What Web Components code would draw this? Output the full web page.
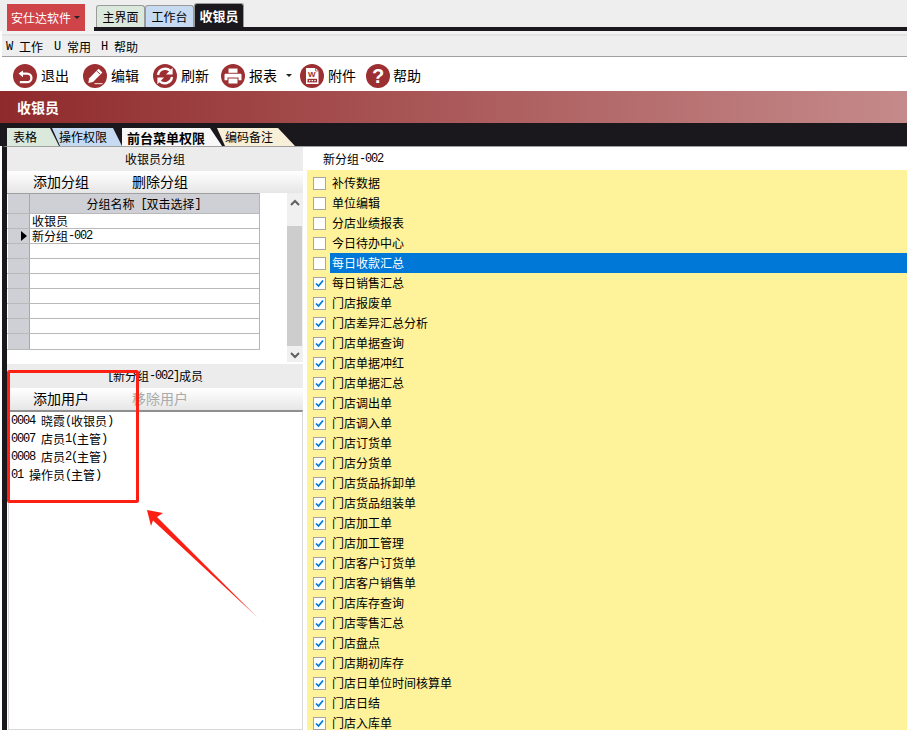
<!doctype html>
<html lang="zh">
<head>
<meta charset="utf-8">
<title>收银员</title>
<style>
  html, body {
    margin: 0;
    height: 730px;
    overflow: hidden;
    background: #fff;
    color: #000;
    font: 12px/1 "Noto Sans CJK SC", sans-serif;
  }
  body { position: relative; display: flex; flex-direction: column; }
</style>
</head>
<body>
<top-bar></top-bar>
<menu-bar></menu-bar>
<tool-bar></tool-bar>
<title-band>收银员</title-band>
<page-tabs></page-tabs>
<main-split>
  <group-panel slot="left"></group-panel>
  <menu-checklist slot="right"></menu-checklist>
</main-split>
<red-markup></red-markup>

<script>
const base = `
  :host, * { box-sizing: border-box; }
  .m { font: 12px/1 "Liberation Mono", monospace; letter-spacing: -1.2px; white-space: pre; }
`

// latin digits in the old UI are half width, the font is not
const lat = text => text.replace(/[0-9A-Za-z\-()\[\] ]+/g, s => `<span class="m">${s}</span>`)

function shadow(el, css, html) {
  el.attachShadow({ mode: "open" }).innerHTML = `<style>${base}${css}</style>${html}`
}

class TopBar extends HTMLElement {
  connectedCallback() {
    shadow(this, `
      :host { display: flex; height: 31px; flex: none; background: #eee; padding-left: 7px; position: relative; }
      .brand { width: 78px; height: 27px; margin-top: 4px; background: #cf4449; color: #fff; display: flex; align-items: center; padding-left: 4px; font-size: 12px; }
      .brand i { width: 0; height: 0; margin-left: 3px; border: 3px solid transparent; border-top: 3px solid #222; border-bottom: 0; }
      .tabs { display: flex; margin-left: 11px; align-items: flex-end; height: 27px; }
      .tab { width: 49px; height: 22px; border: 1px solid #9a9a9a; border-bottom: 0; border-radius: 3px 3px 0 0; display: flex; align-items: center; justify-content: center; font-size: 12px; }
      .a { background: #dbe9dc; }
      .b { background: #c6daf2; }
      .c { background: #1a181d; color: #fff; font-weight: 700; height: 24px; width: 50px; font-size: 13px; }
      .rule { position: absolute; left: 94px; right: 0; bottom: 0; height: 4px; background: #1a181d; }
    `, `
      <div class="brand">安仕达软件<i></i></div>
      <div class="tabs">
        <div class="tab a">主界面</div>
        <div class="tab b">工作台</div>
        <div class="tab c">收银员</div>
      </div>
      <div class="rule"></div>
    `)
  }
}

class MenuBar extends HTMLElement {
  connectedCallback() {
    const items = [["W", "工作", 0], ["U", "常用", 11], ["H", "帮助", 10]]
    shadow(this, `
      :host { display: flex; height: 26px; flex: none; background: #eee; border-top: 3px solid #f2f2f2; border-bottom: 1px solid #a0a0a0; padding: 4px 0 0 4px; align-items: center; box-shadow: inset 0 2px 0 #e3e3e3; margin-left: 2px; }
      span.i { display: flex; align-items: center; gap: 7px; }
      .m { width: 6px; }
      b { font-weight: 400; }
    `, items.map(([k, t, m]) => `<span class="i" style="margin-left:${m}px"><span class="m">${k}</span><b>${t}</b></span>`).join(""))
  }
}

const toolIcons = {
  back: `<path d="M10 6.5 5.5 9.5 10 13.2Z" fill="#fff"/><path d="M8.5 9.6h5.6a4.3 4.3 0 0 1 0 8.6H6.8" fill="none" stroke="#fff" stroke-width="2.3"/>`,
  edit: `<path d="M15.6 4.8 19.4 8.6 10 18 5.3 19 6.2 14.2Z" fill="#fff"/><path d="M14 7.2 17 10.2" stroke="#9c2f32" stroke-width="1"/><path d="M11.5 19.6H19.5" stroke="#e6cfcf" stroke-width="1.2"/>`,
  refresh: `<path d="M5 11A7.4 7.4 0 0 1 17.2 6.6" fill="none" stroke="#fff" stroke-width="2.4"/><path d="M19.6 3.8V10.4H13Z" fill="#fff"/><path d="M19 13A7.4 7.4 0 0 1 6.8 17.4" fill="none" stroke="#fff" stroke-width="2.4"/><path d="M4.4 20.2V13.6H11Z" fill="#fff"/>`,
  print: `<path d="M7.5 4.5h9v4.3h-9Z" fill="#fff"/><path d="M4.5 9.8h15a1 1 0 0 1 1 1v5.4h-3v-2.7h-11v2.7h-3v-5.4a1 1 0 0 1 1-1Z" fill="#fff"/><path d="M7.5 14.5h9v5h-9Z" fill="#fff"/>`,
  attach: `<path d="M6 4h9.5L18.5 7V20H6Z" fill="#fff"/><path d="M15.5 4V7H18.5" fill="none" stroke="#9c2f32" stroke-width=".7"/><text x="11.8" y="12.6" text-anchor="middle" font-family="Liberation Sans" font-weight="700" font-size="8" fill="#9c2f32">W</text><path d="M7.5 14.8h9.5v3.6H7.5Z" fill="#9c2f32"/><path d="M9 16h1.4v1.2H9ZM11.6 16H13v1.2h-1.4ZM14.2 16h1.4v1.2h-1.4Z" fill="#fff"/>`,
  help: `<text x="12" y="19.4" text-anchor="middle" font-family="Liberation Sans" font-weight="700" font-size="20" fill="#fff">?</text>`
}

class ToolButton extends HTMLElement {
  connectedCallback() {
    const icon = toolIcons[this.getAttribute("icon")]
    const caret = this.hasAttribute("caret") ? `<i></i>` : ""
    shadow(this, `
      :host { display: flex; align-items: center; gap: 4px; font-size: 14px; }
      svg { width: 24px; height: 24px; display: block; }
      span { margin-top: -2px; }
      i { width: 0; height: 0; margin-left: 5px; border: 3px solid transparent; border-top: 3px solid #222; border-bottom: 0; }
    `, `<svg viewBox="0 0 24 24"><circle cx="12" cy="12" r="12" fill="#9c2f32"/>${icon}</svg><span><slot></slot></span>${caret}`)
  }
}

class ToolBar extends HTMLElement {
  connectedCallback() {
    shadow(this, `
      :host { display: flex; height: 34px; flex: none; align-items: center; background: #fff; padding: 3px 0 0 13px; }
    `, `
      <tool-button icon="back" style="margin-right:14px">退出</tool-button>
      <tool-button icon="edit" style="margin-right:14px">编辑</tool-button>
      <tool-button icon="refresh" style="margin-right:12px">刷新</tool-button>
      <tool-button icon="print" caret style="margin-right:8px">报表</tool-button>
      <tool-button icon="attach" style="margin-right:10px">附件</tool-button>
      <tool-button icon="help" style="gap:3px">帮助</tool-button>
    `)
  }
}

class TitleBand extends HTMLElement {
  connectedCallback() {
    shadow(this, `
      :host { display: flex; height: 32px; flex: none; align-items: center; padding-left: 17px; color: #fff; font-size: 14px; font-weight: 700; background: linear-gradient(90deg, #8f2a2b, #a34b4c 35%, #c58a8a); }
    `, `<slot></slot>`)
  }
}

class PageTabs extends HTMLElement {
  connectedCallback() {
    shadow(this, `
      :host { display: flex; height: 23px; flex: none; background: #1a181d; padding: 5px 0 0 7px; }
      div { height: 18px; flex: none; display: flex; align-items: center; font-size: 12px; }
      .a { width: 52px; background: #dbe9dc; padding-left: 6px; clip-path: polygon(0 0, calc(100% - 9px) 0, 100% 100%, 0 100%); }
      .b { width: 70px; background: #c6daf2; padding-left: 7px; margin-left: -7px; clip-path: polygon(0 0, calc(100% - 9px) 0, 100% 100%, 8px 100%); }
      .c { width: 100px; background: #f8f8f8; padding-left: 5px; font-size: 13px; font-weight: 700; position: relative; z-index: 1; clip-path: polygon(0 0, calc(100% - 12px) 0, 100% 100%, 0 100%); }
      .d { width: 78px; background: #f8efd9; padding-left: 8px; margin-left: -5px; clip-path: polygon(0 0, calc(100% - 17px) 0, 100% 100%, 8px 100%); }
    `, `<div class="a">表格</div><div class="b">操作权限</div><div class="c">前台菜单权限</div><div class="d">编码备注</div>`)
  }
}

class MainSplit extends HTMLElement {
  connectedCallback() {
    shadow(this, `
      :host { display: grid; grid-template-columns: 296px 1fr; flex: 1; min-height: 0; margin-left: 2px; border-left: 5px solid #1a181d; column-gap: 4px; overflow: hidden; border-top: 1px solid #a0a0a0; }
    `, `<slot name="left"></slot><slot name="right"></slot>`)
  }
}

class GroupPanel extends HTMLElement {
  connectedCallback() {
    const rows = ["收银员", "新分组-002", "", "", "", "", "", "", ""]
    const members = ["0004 晓霞(收银员)", "0007 店员1(主管)", "0008 店员2(主管)", "01 操作员(主管)"]
    shadow(this, `
      :host { display: flex; flex-direction: column; height: 100%; min-height: 0; }
      .cap { height: 24px; flex: none; background: #ececec; display: flex; align-items: center; justify-content: center; white-space: pre; }
      .btns { height: 22px; flex: none; display: flex; font-size: 14px; align-items: center; padding: 0 0 2px 26px; gap: 43px; background: linear-gradient(#fff, #e6e6e6); }
      .off { color: #aaa; }
      .gridwrap { height: 171px; flex: none; display: flex; justify-content: space-between; background: #fff; }
      .grid { width: 253px; height: 157px; border-right: 1px solid #b5b5b5; }
      .row { display: grid; grid-template-columns: 23px 1fr; height: 15px; border-bottom: 1px solid #b9b9b9; }
      .row .h { background: #cfd0d5; border-left: 1px solid #fff; border-right: 1px solid #a8a8a8; display: flex; align-items: center; justify-content: flex-end; padding-right: 2px; }
      .row .c { padding-left: 2px; display: flex; align-items: center; white-space: pre; }
      .row.head { height: 21px; background: #cfd0d5; border-top: 1px solid #a0a0a0; }
      .row.head .c { justify-content: center; background: #cfd0d5; padding: 0 2px 0 0; }
      .row.last { height: 16px; }
      .tri { width: 0; height: 0; border: 5px solid transparent; border-left: 6px solid #000; border-right: 0; }
      .scroll { width: 16px; height: 169px; background: #f0f0f0; display: flex; flex-direction: column; align-items: center; }
      .scroll svg { flex: none; margin: 6px 0 0; }
      .thumb { width: 15px; height: 120px; margin: 20px 1px 0 0; background: #cdcdcd; flex: none; }
      .scroll svg.dn { margin-top: 6px; }
      .list { flex: 1; min-height: 0; background: #fff; border: 1px solid #d8d8d8; border-top: 2px solid #8f8f8f; margin-left: 1px; padding: 0 0 0 2px; }
      .list div { height: 18px; display: flex; align-items: center; white-space: pre; }
    `, `
      <div class="cap">收银员分组</div>
      <div class="btns"><span>添加分组</span><span>删除分组</span></div>
      <div class="gridwrap">
        <div class="grid">
          <div class="row head"><div class="h"></div><div class="c">${lat("分组名称 [双击选择]")}</div></div>
          ${rows.map((r, i) => `<div class="row${i == 8 ? " last" : ""}"><div class="h">${i == 1 ? `<span class="tri"></span>` : ""}</div><div class="c">${lat(r)}</div></div>`).join("")}
        </div>
        <div class="scroll">
          <svg width="10" height="7" viewBox="0 0 10 7"><path d="M1 6 5 2l4 4" fill="none" stroke="#606060" stroke-width="2"/></svg>
          <div class="thumb"></div>
          <svg class="dn" width="10" height="7" viewBox="0 0 10 7"><path d="M1 1l4 4 4-4" fill="none" stroke="#606060" stroke-width="2"/></svg>
        </div>
      </div>
      <div class="cap">${lat("[新分组-002]成员")}</div>
      <div class="btns"><span>添加用户</span><span class="off">移除用户</span></div>
      <div class="list">${members.map(m => `<div>${lat(m)}</div>`).join("")}</div>
    `)
  }
}

class MenuChecklist extends HTMLElement {
  connectedCallback() {
    const names = ["补传数据", "单位编辑", "分店业绩报表", "今日待办中心", "每日收款汇总", "每日销售汇总", "门店报废单", "门店差异汇总分析", "门店单据查询", "门店单据冲红", "门店单据汇总", "门店调出单", "门店调入单", "门店订货单", "门店分货单", "门店货品拆卸单", "门店货品组装单", "门店加工单", "门店加工管理", "门店客户订货单", "门店客户销售单", "门店库存查询", "门店零售汇总", "门店盘点", "门店期初库存", "门店日单位时间核算单", "门店日结", "门店入库单"]
    shadow(this, `
      :host { display: flex; flex-direction: column; height: 100%; min-height: 0; overflow: hidden; background: #fef29b; }
      .head { height: 23px; flex: none; background: #fff; display: flex; align-items: center; padding-left: 16px; margin-bottom: 3px; }
      .row { height: 20px; flex: none; display: flex; align-items: center; padding-left: 6px; }
      .box { width: 13px; height: 13px; background: #fff; border: 1px solid #a5a5a5; flex: none; margin-right: 4px; }
      .box svg { display: block; }
      .t { flex: 1; height: 20px; display: flex; align-items: center; padding-left: 2px; }
      .sel .t { background: #0078d7; color: #fff; }
    `, `
      <div class="head">${lat("新分组-002")}</div>
      ${names.map((n, i) => `<div class="row${i == 4 ? " sel" : ""}"><div class="box">${i >= 5 ? `<svg width="11" height="11" viewBox="0 0 11 11"><path d="M2 5.5 4.5 8 9 2.5" fill="none" stroke="#0078d7" stroke-width="1.7"/></svg>` : ""}</div><div class="t">${n}</div></div>`).join("")}
    `)
  }
}

// hand drawn annotation laid over the screenshot
class RedMarkup extends HTMLElement {
  connectedCallback() {
    shadow(this, `
      :host { position: absolute; left: 0; top: 0; width: 907px; height: 730px; pointer-events: none; }
      svg { display: block; }
    `, `
      <svg width="907" height="730" viewBox="0 0 907 730">
        <rect x="8.5" y="371.5" width="129" height="130" rx="1" fill="none" stroke="#fb1f14" stroke-width="3"/>
        <path d="M147 510 163 513 157 517 257.5 617.5 153 520.5 151 526Z" fill="#fb1f14"/>
      </svg>
    `)
  }
}

customElements.define("top-bar", TopBar)
customElements.define("menu-bar", MenuBar)
customElements.define("tool-button", ToolButton)
customElements.define("tool-bar", ToolBar)
customElements.define("title-band", TitleBand)
customElements.define("page-tabs", PageTabs)
customElements.define("main-split", MainSplit)
customElements.define("group-panel", GroupPanel)
customElements.define("menu-checklist", MenuChecklist)
customElements.define("red-markup", RedMarkup)
</script>
</body>
</html>
